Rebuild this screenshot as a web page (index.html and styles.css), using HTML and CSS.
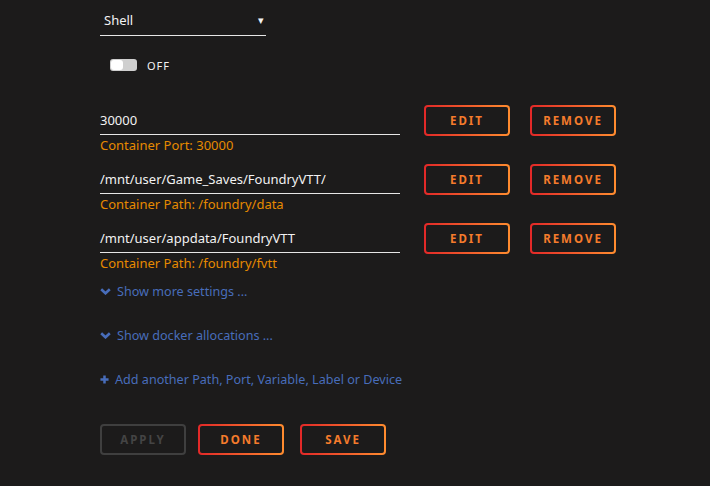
FILE: index.html
```html
<!DOCTYPE html>
<html>
<head>
<meta charset="utf-8">
<title>Update Container</title>
<link rel="stylesheet" href="styles.css">
</head>
<body>
<div class="form">
    <div class="select">
        <span>Shell</span>
        <span class="caret">&#9662;</span>
    </div>

    <div class="switch">
        <span class="toggle"><span class="knob"></span></span>
        <span class="switch-label">OFF</span>
    </div>

    <div class="config">
        <div class="config-field">
            <div class="value">30000</div>
            <div class="hint">Container Port: 30000</div>
        </div>
        <button class="btn">Edit</button>
        <button class="btn">Remove</button>
    </div>
    <div class="config">
        <div class="config-field">
            <div class="value">/mnt/user/Game_Saves/FoundryVTT/</div>
            <div class="hint">Container Path: /foundry/data</div>
        </div>
        <button class="btn">Edit</button>
        <button class="btn">Remove</button>
    </div>
    <div class="config">
        <div class="config-field">
            <div class="value">/mnt/user/appdata/FoundryVTT</div>
            <div class="hint">Container Path: /foundry/fvtt</div>
        </div>
        <button class="btn">Edit</button>
        <button class="btn">Remove</button>
    </div>

    <a class="link more"><svg class="chev" viewBox="0 0 11 7"><path d="M1.2 1.2L5.5 5.3 9.8 1.2" /></svg>Show more settings ...</a>
    <a class="link alloc"><svg class="chev" viewBox="0 0 11 7"><path d="M1.2 1.2L5.5 5.3 9.8 1.2" /></svg>Show docker allocations ...</a>
    <a class="link add"><svg class="plus" viewBox="0 0 10 10"><path d="M5 0.5V9.5M0.5 5H9.5" /></svg>Add another Path, Port, Variable, Label or Device</a>

    <div class="actions">
        <button class="btn disabled">Apply</button>
        <button class="btn">Done</button>
        <button class="btn save">Save</button>
    </div>
</div>
</body>
</html>
```

FILE: styles.css
```css
html,body{margin:0;padding:0;}
body{background:#1c1b1b;color:#f2f2f2;font-family:"Noto Sans","Open Sans",sans-serif;font-size:13px;height:486px;overflow:hidden;}
.form{padding:8px 0 0 100px;}

.select{width:166px;height:28px;line-height:24px;border-bottom:1px solid #e6e6e6;display:flex;justify-content:space-between;align-items:flex-start;padding-left:4px;box-sizing:border-box;}
.select .caret{font-size:11px;margin-right:2px;}

.switch{display:flex;align-items:center;margin:23px 0 1px 10px;height:12px;}
.toggle{width:27px;height:12px;background:#cfcfcf;border-radius:3px;position:relative;display:inline-block;}
.knob{position:absolute;left:1px;top:1px;width:12px;height:10px;background:#fff;border-radius:3px;}
.switch-label{margin-left:10px;font-size:11px;letter-spacing:1px;}

.config{display:flex;align-items:flex-start;margin-top:36px;}
.config + .config{margin-top:11px;}
.config-field{width:300px;margin-right:24px;}
.value{height:28px;line-height:27px;border-bottom:1px solid #e6e6e6;box-sizing:border-box;}
.hint{color:#e68a00;line-height:20px;}

.btn{font-family:"Noto Sans","Open Sans",sans-serif;font-weight:bold;font-size:11.5px;letter-spacing:2px;text-transform:uppercase;width:86px;height:31px;border:2px solid transparent;border-radius:4px;color:#f57b2c;background:linear-gradient(#1c1b1b,#1c1b1b) padding-box,linear-gradient(90deg,#e22828,#ff8c2f) border-box;padding:0;margin:0;cursor:pointer;}
.config .btn{margin-top:-2px;}
.config .btn + .btn{margin-left:20px;}
.btn.disabled{background:#1c1b1b;border-color:#3f3f3f;color:#444;}

.link{display:flex;align-items:center;color:#486dba;height:18px;font-size:12.6px;}
.link svg{fill:none;stroke:#486dba;margin-right:6px;}
.chev{width:11px;height:7px;stroke-width:2.6;}
.plus{width:9px;height:9px;stroke-width:2.8;margin-right:5px;}
.more{margin-top:9px;}
.alloc{margin-top:26px;}
.add{margin-top:26px;}

.actions{display:flex;margin-top:36px;}
.actions .btn{margin-right:12px;}
.actions .save{margin-left:4px;}
```
